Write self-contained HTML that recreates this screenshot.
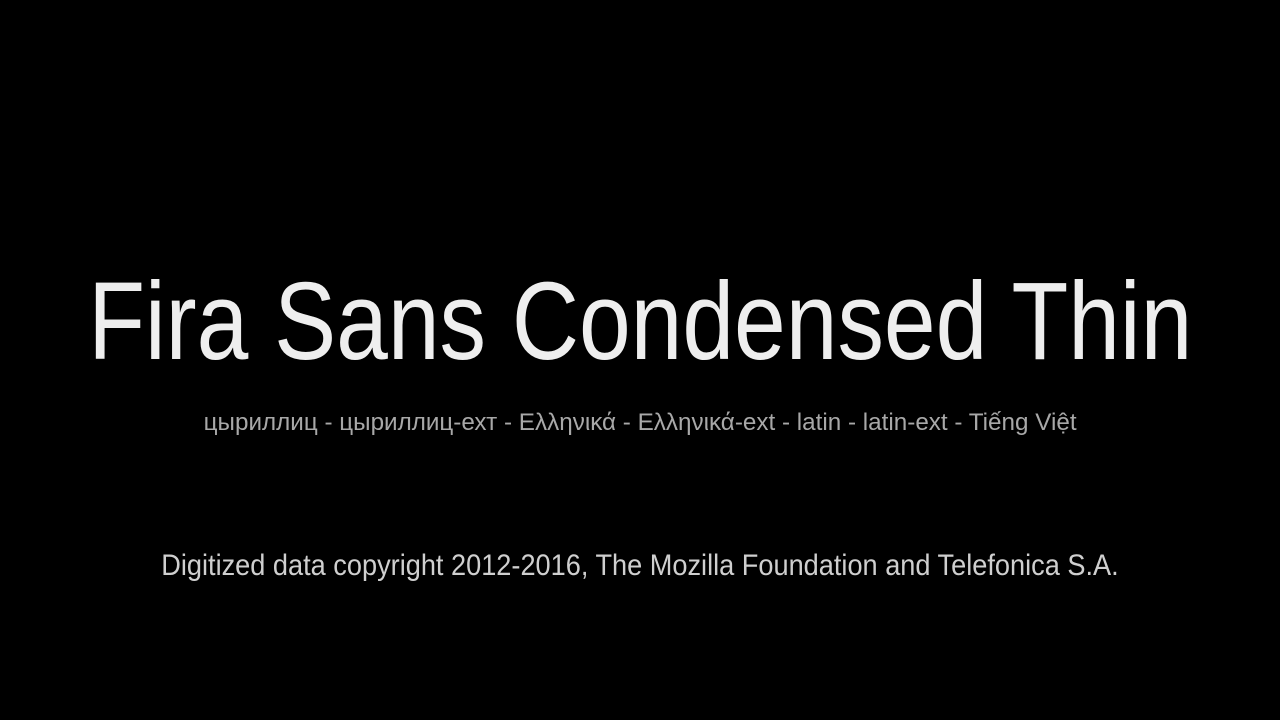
<!DOCTYPE html>
<html><head><meta charset="utf-8"><style>
html,body{margin:0;padding:0;background:#000;width:1280px;height:720px;overflow:hidden;}
.l{position:absolute;left:-500px;width:2280px;text-align:center;font-family:"Liberation Sans",sans-serif;white-space:nowrap;}
.l span{display:inline-block;transform-origin:center;}
#t{top:262px;font-size:110px;line-height:120px;color:#eeeeee;}
#t span{transform:scaleX(0.845);}
#s{top:406px;font-size:24px;line-height:34px;color:#a8a8a8;}
#s span{transform:scaleX(1.01);}
#f{top:546px;font-size:30px;line-height:40px;color:#cfcfcf;}
#f span{transform:scaleX(0.905);}
</style></head><body>
<div class="l" id="t"><span>Fira Sans Condensed Thin</span></div>
<div class="l" id="s"><span>цыриллиц - цыриллиц-ехт - Ελληνικά - Ελληνικά-ext - latin - latin-ext - Tiếng Việt</span></div>
<div class="l" id="f"><span>Digitized data copyright 2012-2016, The Mozilla Foundation and Telefonica S.A.</span></div>
</body></html>
